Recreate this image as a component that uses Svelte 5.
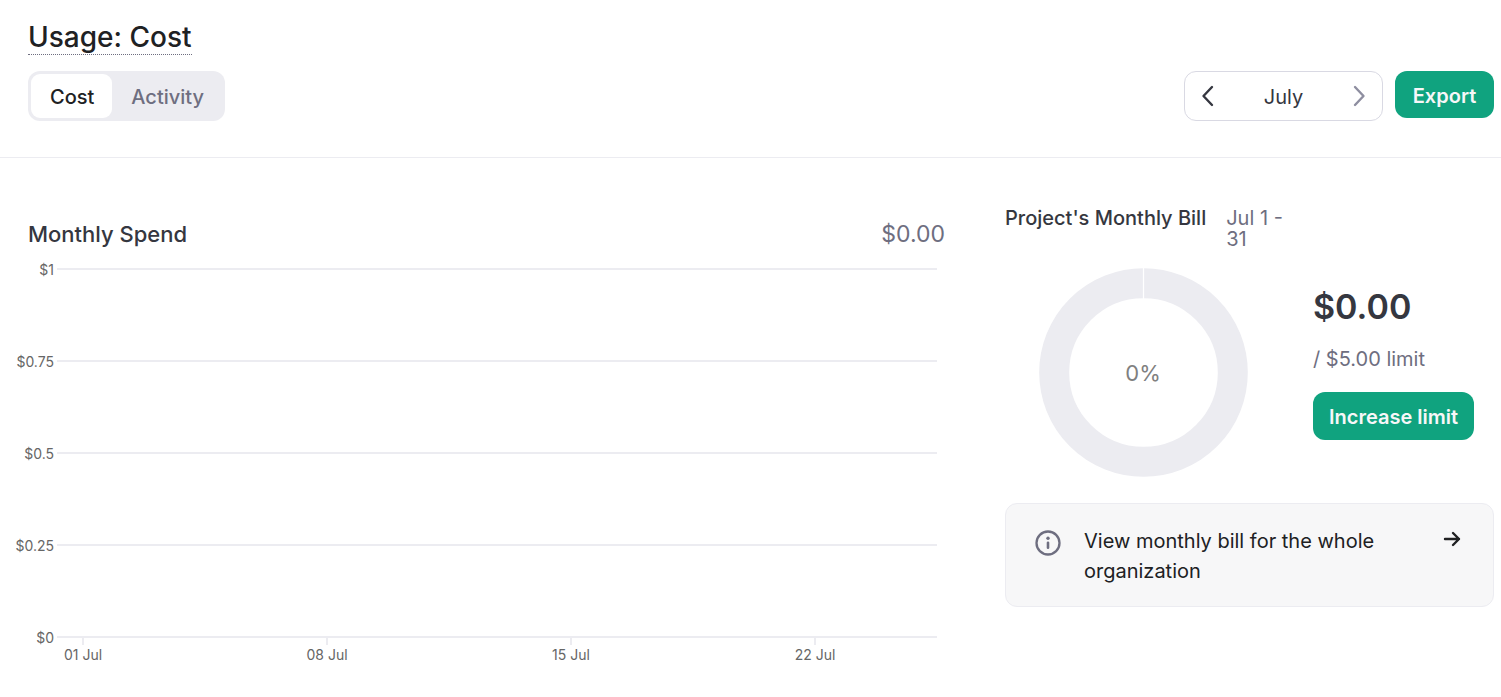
<script>
  const amounts = ['$1', '$0.75', '$0.5', '$0.25'];
  const days = ['01 Jul', '08 Jul', '15 Jul', '22 Jul'];
  let view = $state('Cost');
</script>

<header>
  <h1>Usage: Cost</h1>
  <div class="toolbar">
    <div class="tabs">
      {#each ['Cost', 'Activity'] as name}
        <button class="tab" class:active={view === name} aria-pressed={view === name} onclick={() => (view = name)}>{name}</button>
      {/each}
    </div>
    <div class="actions">
      <div class="month">
        <button class="step" aria-label="Previous month">
          <svg width="14" height="22" viewBox="0 0 14 22"><path d="M11 2 2.500 11 11 20" /></svg>
        </button>
        <span>July</span>
        <button class="step next" aria-label="Next month">
          <svg width="14" height="22" viewBox="0 0 14 22"><path d="M3 2 11.500 11 3 20" /></svg>
        </button>
      </div>
      <button class="primary export">Export</button>
    </div>
  </div>
</header>

<main>
  <section class="spend">
    <div class="spend-head">
      <h2>Monthly Spend</h2>
      <span class="total">$0.00</span>
    </div>
    <div class="chart">
      {#each amounts as amount}
        <div class="band">
          <span class="amount">{amount}</span>
          <div class="line"></div>
        </div>
      {/each}
      <div class="band base">
        <span class="amount">$0</span>
        <div class="line">
          {#each days as day}
            <span class="day">{day}</span>
          {/each}
        </div>
      </div>
    </div>
  </section>

  <section class="bill">
    <div class="bill-head">
      <h3>Project's Monthly Bill</h3>
      <span class="range">Jul 1 - 31</span>
    </div>
    <div class="bill-body">
      <svg class="donut" width="210" height="210" viewBox="0 0 210 210" role="img" aria-label="0% of limit used">
        <circle cx="104.500" cy="104.500" r="89.300" fill="none" stroke="#ececf1" stroke-width="30" />
        <path d="M104.500 0V31" stroke="#fff" stroke-width="1.300" />
        <text x="104" y="113" text-anchor="middle">0%</text>
      </svg>
      <div class="limit">
        <strong>$0.00</strong>
        <span class="cap">/ $5.00 limit</span>
        <button class="primary">Increase limit</button>
      </div>
    </div>
    <a class="notice" href="#organization">
      <svg class="info" width="26" height="26" viewBox="0 0 26 26">
        <circle cx="13" cy="13" r="11.500" fill="none" stroke="#6e6e80" stroke-width="2.300" />
        <path d="M13 12.700V17.800" stroke="#6e6e80" stroke-width="2.600" stroke-linecap="round" />
        <circle cx="13" cy="8.300" r="1.700" fill="#6e6e80" />
      </svg>
      <span>View monthly bill for the whole organization</span>
      <svg class="arrow" width="18" height="16" viewBox="0 0 18 16"><path d="M2 8H16M10 2l6 6-6 6" /></svg>
    </a>
  </section>
</main>

<style>
  :global(body) {
    background: #fff;
    color: #353740;
    font-family: Inter, "Liberation Sans", sans-serif;
    font-size: 20px;
  }
  h1, h2, h3 { margin: 0; font-weight: 500; }
  button { font: inherit; border: 0; padding: 0; cursor: pointer; }
  header {
    padding: 20px 7px 36px 28px;
    border-bottom: 1px solid #ececf1;
  }
  h1 {
    width: fit-content;
    font-size: 28px;
    line-height: 34px;
    color: #202123;
    border-bottom: 1px dotted #6e6e80;
  }
  .toolbar {
    display: flex;
    justify-content: space-between;
    align-items: flex-start;
    margin-top: 16px;
  }
  .tabs {
    display: flex;
    box-sizing: border-box;
    height: 50px;
    padding: 3px;
    border-radius: 12px;
    background: #ececf1;
  }
  .tab {
    height: 44px;
    padding: 2px 18px 0 19px;
    border-radius: 9px;
    background: none;
    color: #6e6e80;
    font-weight: 500;
  }
  .tab.active { background: #fff; color: #202123; }
  .actions { display: flex; gap: 12px; }
  .month {
    display: flex;
    align-items: center;
    justify-content: space-between;
    box-sizing: border-box;
    width: 199px;
    height: 50px;
    padding: 0 16px;
    border: 1px solid #d9d9e3;
    border-radius: 12px;
  }
  .month span { padding-top: 2px; }
  .step { display: flex; background: none; color: #353740; }
  .step.next { color: #8e8ea0; }
  .step path, .arrow path {
    fill: none;
    stroke: currentColor;
    stroke-width: 2.4;
    stroke-linecap: round;
    stroke-linejoin: round;
  }
  .primary {
    height: 48px;
    padding: 2px 16px 0;
    border-radius: 12px;
    background: #10a37f;
    color: #f7f7f8;
    font-weight: 600;
  }
  .export { min-width: 99px; height: 47px; }
  main {
    display: grid;
    grid-template-columns: 945fr 489fr;
    gap: 60px;
    padding-right: 7px;
  }
  .spend { padding-top: 60px; }
  .spend-head {
    display: flex;
    justify-content: space-between;
    padding-left: 28px;
    line-height: 32px;
    font-size: 23px;
  }
  h2 { font-size: 22px; }
  .total { color: #6e6e80; }
  .chart { padding: 18px 8px 0 0; }
  .band {
    display: grid;
    grid-template-columns: 54px 1fr;
    column-gap: 3px;
    height: 92px;
    font-size: 14px;
    color: #666;
  }
  .amount { line-height: 20px; margin-top: -8px; text-align: right; }
  .line { border-top: 2px solid #ececf1; }
  .base { height: 40px; }
  .base .line {
    display: flex;
    justify-content: space-between;
    padding-right: 96px;
  }
  .day { width: 52px; line-height: 20px; text-align: center; white-space: nowrap; }
  .day::before {
    content: "";
    display: block;
    width: 2px;
    height: 7px;
    margin: 0 auto;
    background: #ececf1;
  }
  .bill { padding-top: 50px; }
  .bill-head {
    display: flex;
    gap: 20px;
    line-height: 21px;
  }
  h3 { font-size: 20px; white-space: nowrap; }
  .range { width: 64px; color: #6e6e80; }
  .bill-body {
    display: flex;
    align-items: center;
    gap: 64px;
    padding: 18px 0 0 34px;
  }
  .donut { flex: none; }
  .donut text { font-size: 22px; fill: #808080; }
  .limit {
    display: flex;
    flex-direction: column;
    align-items: flex-start;
    padding-bottom: 22px;
  }
  .limit strong { font-size: 34px; font-weight: 600; line-height: 44px; }
  .cap { margin: 16px 0 19px; line-height: 28px; color: #6e6e80; }
  .notice {
    display: flex;
    align-items: flex-start;
    margin-top: 25px;
    padding: 22px 32px 20px 29px;
    border: 1px solid #ececf1;
    border-radius: 12px;
    background: #f7f7f8;
    color: #202123;
    line-height: 30px;
    text-decoration: none;
  }
  .notice span { flex: 1; padding: 0 60px 0 23px; }
  .info { margin-top: 4px; }
  .arrow { margin-top: 5px; }
</style>
